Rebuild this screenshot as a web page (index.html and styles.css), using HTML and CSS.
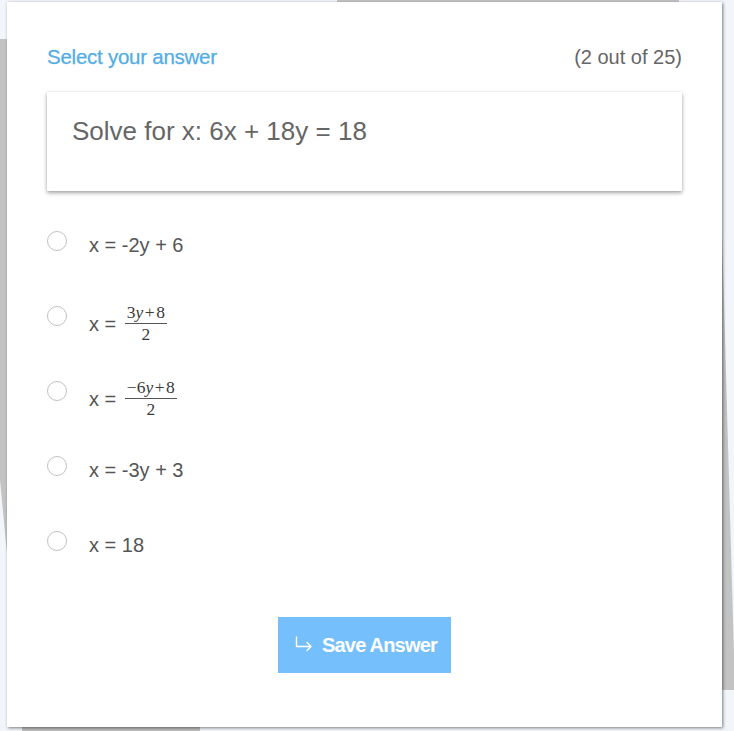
FILE: index.html
```html
<!DOCTYPE html>
<html>
<head>
<meta charset="utf-8">
<link rel="stylesheet" href="styles.css">
</head>
<body>
<svg class="backdrop" width="734" height="731" viewBox="0 0 734 731" aria-hidden="true">
  <polygon points="0,39 9,39 9,575 0,480" fill="#c3c3c3"/>
  <polygon points="337,0 679,0 679,12 337,12" fill="#c3c3c3"/>
  <polygon points="720,233 722,233 735,690 720,690" fill="#c3c3c3"/>
  <polygon points="22,720 200,720 200,731 22,731" fill="#bdbdbd"/>
</svg>
<main class="card">
  <div class="header">
    <span class="title">Select your answer</span>
    <span class="count">(2 out of 25)</span>
  </div>
  <div class="question">Solve for x: 6x + 18y = 18</div>
  <div class="options">
    <label class="option"><span class="radio"></span><span class="opt-text">x = -2y + 6</span></label>
    <label class="option"><span class="radio"></span><span class="opt-text frac-row">x = <span class="frac"><span class="num">3<i>y</i><span class="op">+</span>8</span><span class="den">2</span></span></span></label>
    <label class="option"><span class="radio"></span><span class="opt-text frac-row">x = <span class="frac"><span class="num">−6<i>y</i><span class="op">+</span>8</span><span class="den">2</span></span></span></label>
    <label class="option"><span class="radio"></span><span class="opt-text">x = -3y + 3</span></label>
    <label class="option"><span class="radio"></span><span class="opt-text">x = 18</span></label>
  </div>
  <div class="actions">
    <button class="save">
      <svg class="save-icon" width="18" height="16" viewBox="0 0 18 16" aria-hidden="true">
        <path d="M1.5 1 V10.5 H16 M12 6.5 L16 10.5 L12 14.5" fill="none" stroke="#fff" stroke-width="1.4" stroke-linecap="round" stroke-linejoin="round"/>
      </svg>
      <span>Save Answer</span>
    </button>
  </div>
</main>
</body>
</html>
```
FILE: styles.css
```css
html, body {
  margin: 0;
  padding: 0;
}
body {
  background: #f2f6fa;
  width: 734px;
  height: 731px;
  overflow: hidden;
  position: relative;
  font-family: "Liberation Sans", Arial, sans-serif;
}
.backdrop {
  position: absolute;
  left: 0;
  top: 0;
  z-index: 0;
}
.card {
  position: relative;
  z-index: 1;
  margin: 2px 0 0 7px;
  width: 715px;
  height: 725px;
  box-sizing: border-box;
  padding: 43px 40px 0 40px;
  background: #fff;
  box-shadow: 1px 1px 3px rgba(0, 0, 0, 0.5);
}
.header {
  display: flex;
  justify-content: space-between;
  align-items: baseline;
  height: 23px;
  line-height: 23px;
}
.title {
  color: #52ade6;
  font-size: 20.5px;
  letter-spacing: -0.25px;
  -webkit-text-stroke: 0.25px #52ade6;
}
.count {
  color: #666;
  font-size: 20px;
}
.question {
  margin-top: 24px;
  height: 99px;
  box-sizing: border-box;
  padding: 24px 25px 0 25px;
  font-size: 26px;
  line-height: 30px;
  color: #666;
  background: #fff;
  box-shadow: 0 2px 4px rgba(0, 0, 0, 0.35), 0 0 2px rgba(0, 0, 0, 0.08);
}
.options {
  margin-top: 40px;
  display: flex;
  flex-direction: column;
}
.option {
  display: flex;
  align-items: flex-start;
  height: 75px;
}
.radio {
  flex: none;
  width: 20px;
  height: 20px;
  box-sizing: border-box;
  border: 1px solid #c2c2c2;
  border-radius: 50%;
  background: #fff;
}
.opt-text {
  margin-left: 22px;
  margin-top: 3px;
  font-size: 20px;
  line-height: 23px;
  color: #555;
  white-space: nowrap;
}
.opt-text.frac-row {
  margin-top: -2.5px;
}
.frac {
  display: inline-flex;
  flex-direction: column;
  align-items: stretch;
  vertical-align: middle;
  margin-left: 3px;
  padding-bottom: 5px;
  font-family: "Liberation Serif", "Times New Roman", serif;
  font-size: 17.5px;
  color: #3a3a3a;
  text-align: center;
}
.frac i {
  font-style: italic;
}
.num {
  line-height: 16px;
  padding: 0 2px 3px;
  border-bottom: 1px solid #555;
}
.op {
  margin: 0 1.5px;
}
.den {
  line-height: 16px;
  padding-top: 2px;
}
.actions {
  margin-top: 11px;
  display: flex;
  justify-content: center;
}
.save {
  display: flex;
  align-items: center;
  height: 56px;
  padding: 0 14px 0 17px;
  border: none;
  background: #74bffc;
  color: #fff;
  font-family: "Liberation Sans", Arial, sans-serif;
  font-weight: bold;
  font-size: 20px;
  letter-spacing: -0.8px;
}
.save-icon {
  margin-right: 9px;
  margin-top: -3px;
}
```
